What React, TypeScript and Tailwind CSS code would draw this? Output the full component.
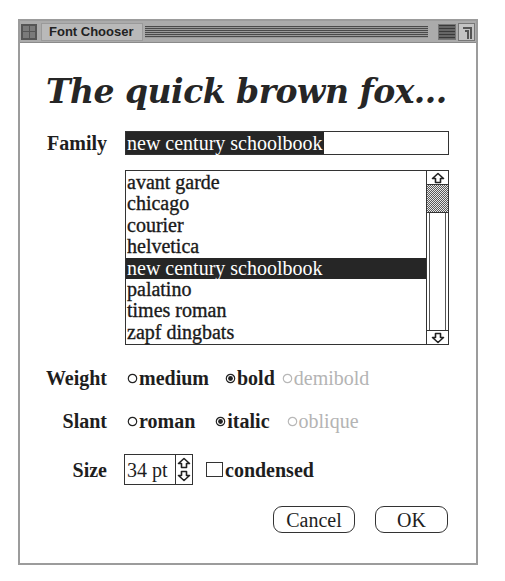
import React from "react";

function Radio({ checked, disabled }: { checked?: boolean; disabled?: boolean }) {
  const c = disabled ? "#b8b8b8" : "#222";
  return (
    <svg width="11" height="11" viewBox="0 0 11 11" className="shrink-0">
      <circle cx="5.5" cy="5.5" r="4.2" fill="white" stroke={c} strokeWidth="1.2" />
      {checked && <circle cx="5.5" cy="5.5" r="2.4" fill={c} />}
    </svg>
  );
}

function ArrowUp() {
  return (
    <svg width="14" height="12" viewBox="0 0 14 12">
      <path d="M7 1.5 L12.5 6.5 L9.5 6.5 L9.5 10.5 L4.5 10.5 L4.5 6.5 L1.5 6.5 Z" fill="white" stroke="#222" strokeWidth="1.6" strokeLinejoin="round" />
    </svg>
  );
}

function ArrowDown() {
  return (
    <svg width="14" height="12" viewBox="0 0 14 12">
      <path d="M7 10.5 L12.5 5.5 L9.5 5.5 L9.5 1.5 L4.5 1.5 L4.5 5.5 L1.5 5.5 Z" fill="white" stroke="#222" strokeWidth="1.6" strokeLinejoin="round" />
    </svg>
  );
}

const families = [
  "avant garde",
  "chicago",
  "courier",
  "helvetica",
  "new century schoolbook",
  "palatino",
  "times roman",
  "zapf dingbats",
];

export default function App() {
  return (
    <div className="w-[505px] h-[581px] bg-white pt-[19px] pl-[18px] font-['Liberation_Serif',serif] text-[#1e1e1e]">
      <div className="w-[460px] h-[546px] border-2 border-[#9c9c9c] flex flex-col">
        {/* Title bar */}
        <div className="h-[22px] bg-[#ababab] border-b border-[#8a8a8a] flex items-center px-[1px]">
          <div className="w-[16px] h-[16px] bg-[#555] grid grid-cols-2 gap-[1px] p-[2px]">
            <div className="bg-[#7a7a7a]" />
            <div className="bg-[#7a7a7a]" />
            <div className="bg-[#7a7a7a]" />
            <div className="bg-[#7a7a7a]" />
          </div>
          <div className="ml-[4px] h-[18px] w-[102px] bg-[#b9b9b9] border border-[#9a9a9a] flex items-center pl-[7px]">
            <span className="font-['Liberation_Sans',sans-serif] font-bold text-[13px] leading-none text-[#222]">Font Chooser</span>
          </div>
          <div className="ml-[2px] h-[12px] w-[283px] bg-[#8a8a8a] [background-image:repeating-linear-gradient(180deg,#4a4a4a_0px,#4a4a4a_1px,#9a9a9a_1px,#9a9a9a_2px)]" />
          <div className="flex-1" />
          <div className="w-[18px] h-[16px] bg-[#505050] border border-[#777] mr-[2px] [background-image:repeating-linear-gradient(180deg,#3a3a3a_0px,#3a3a3a_1px,#666_1px,#666_3px)]" />
          <div className="w-[17px] h-[18px] bg-[#c4c4c4] border border-[#777] relative">
            <div className="absolute right-[2px] top-[3px] w-[9px] h-[12px] border-t-2 border-r-2 border-[#555]" />
            <div className="absolute right-[5px] top-[6px] w-[4px] h-[9px] border-t-2 border-r-2 border-[#555]" />
          </div>
        </div>

        {/* Heading */}
        <div className="mt-[26px] pl-[26px] h-[44px] flex items-center">
          <span className="font-['DejaVu_Serif',serif] font-bold italic text-[33px] leading-none tracking-[-0.5px] text-[#262626]">
            The quick brown fox...
          </span>
        </div>

        {/* Family */}
        <div className="mt-[18px] flex items-center">
          <div className="w-[87px] text-right font-bold text-[20px] leading-none">Family</div>
          <div className="ml-[18px] w-[324px] h-[24px] border border-[#333] flex items-stretch">
            <div className="bg-[#262626] text-white text-[20px] leading-[22px] pr-[1px] pl-[1px]">new century schoolbook</div>
          </div>
        </div>

        {/* List */}
        <div className="mt-[15px] ml-[105px] w-[324px] h-[175px] border border-[#333] flex">
          <div className="flex-1 flex flex-col pt-[1px]">
            {families.map((f) => (
              <div
                key={f}
                className={
                  "h-[21.4px] leading-[21px] text-[20px] pl-[1px] " +
                  (f === "new century schoolbook"
                    ? "bg-[#262626] text-white"
                    : "text-[#1a1a1a] [-webkit-text-stroke:0.35px_#1a1a1a]")
                }
              >
                {f}
              </div>
            ))}
          </div>
          <div className="w-[22px] border-l border-[#333] flex flex-col">
            <div className="h-[14px] flex items-center justify-center border-b border-[#333]">
              <ArrowUp />
            </div>
            <div className="h-[28px] bg-[#999] [background-image:repeating-conic-gradient(#5a5a5a_0_25%,#e8e8e8_0_50%)] [background-size:2px_2px] border-b border-[#333]" />
            <div className="flex-1 mx-[2px] border-x border-[#555]" />
            <div className="h-[14px] flex items-center justify-center border-t border-[#333]">
              <ArrowDown />
            </div>
          </div>
        </div>

        {/* Weight */}
        <div className="mt-[21px] h-[24px] flex items-center text-[20px] leading-none">
          <div className="w-[87px] text-right font-bold">Weight</div>
          <div className="ml-[20px] flex items-center">
            <Radio />
            <span className="ml-[1px] font-bold">medium</span>
          </div>
          <div className="ml-[16px] flex items-center">
            <Radio checked />
            <span className="ml-[1px] font-bold">bold</span>
          </div>
          <div className="ml-[7px] flex items-center text-[#b4b4b4]">
            <Radio disabled />
            <span className="ml-[1px]">demibold</span>
          </div>
        </div>

        {/* Slant */}
        <div className="mt-[19px] h-[24px] flex items-center text-[20px] leading-none">
          <div className="w-[87px] text-right font-bold">Slant</div>
          <div className="ml-[20px] flex items-center">
            <Radio />
            <span className="ml-[1px] font-bold">roman</span>
          </div>
          <div className="ml-[20px] flex items-center">
            <Radio checked />
            <span className="ml-[1px] font-bold">italic</span>
          </div>
          <div className="ml-[17px] flex items-center text-[#b4b4b4]">
            <Radio disabled />
            <span className="ml-[1px]">oblique</span>
          </div>
        </div>

        {/* Size */}
        <div className="mt-[21px] h-[31px] flex items-center text-[20px] leading-none">
          <div className="w-[87px] text-right font-bold">Size</div>
          <div className="ml-[17px] w-[69px] h-[31px] border border-[#333] flex">
            <div className="flex-1 flex items-center pl-[2px]">34 pt</div>
            <div className="w-[17px] border-l border-[#333] flex flex-col items-center justify-center gap-[1px]">
              <ArrowUp />
              <ArrowDown />
            </div>
          </div>
          <div className="ml-[13px] w-[17px] h-[15px] border border-[#333]" />
          <span className="ml-[2px] font-bold">condensed</span>
        </div>

        {/* Buttons */}
        <div className="mt-[21px] flex items-center text-[20px] leading-none">
          <div className="ml-[253px] w-[82px] h-[27px] rounded-[9px] border-[1.5px] border-[#333] flex items-center justify-center">
            Cancel
          </div>
          <div className="ml-[20px] w-[73px] h-[27px] rounded-[9px] border-[1.5px] border-[#333] flex items-center justify-center">
            OK
          </div>
        </div>
      </div>
    </div>
  );
}
